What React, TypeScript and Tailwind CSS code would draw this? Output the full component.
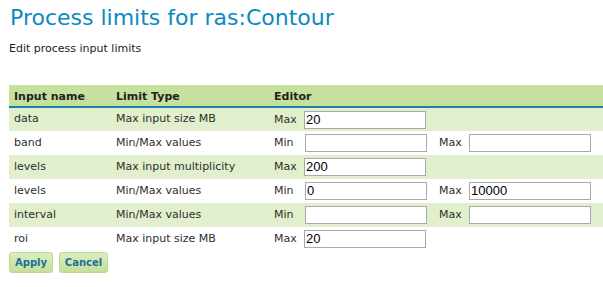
type Limit =
  | { kind: 'max'; value: string }
  | { kind: 'minmax'; min: string; max: string };

interface Row {
  name: string;
  type: string;
  limit: Limit;
}

const rows: Row[] = [
  { name: 'data', type: 'Max input size MB', limit: { kind: 'max', value: '20' } },
  { name: 'band', type: 'Min/Max values', limit: { kind: 'minmax', min: '', max: '' } },
  { name: 'levels', type: 'Max input multiplicity', limit: { kind: 'max', value: '200' } },
  { name: 'levels', type: 'Min/Max values', limit: { kind: 'minmax', min: '0', max: '10000' } },
  { name: 'interval', type: 'Min/Max values', limit: { kind: 'minmax', min: '', max: '' } },
  { name: 'roi', type: 'Max input size MB', limit: { kind: 'max', value: '20' } },
];

function LimitInput({ value }: { value: string }) {
  return (
    <input
      type="text"
      defaultValue={value}
      className="h-[18px] w-[122px] border border-[#a9a9a9] bg-white px-[1px] text-[13px] text-black outline-none"
      style={{ fontFamily: '"Liberation Sans", Arial, sans-serif' }}
    />
  );
}

function Editor({ limit }: { limit: Limit }) {
  if (limit.kind === 'max') {
    return (
      <div className="flex items-start">
        <span className="w-[30px] pt-[1px]">Max</span>
        <LimitInput value={limit.value} />
      </div>
    );
  }
  return (
    <div className="flex items-start">
      <span className="w-[31px] pt-[1px]">Min</span>
      <LimitInput value={limit.min} />
      <span className="ml-[12px] w-[30px] pt-[1px]">Max</span>
      <LimitInput value={limit.max} />
    </div>
  );
}

export default function App() {
  return (
    <div
      className="h-[287px] w-[603px] overflow-hidden bg-white pl-[9px] text-[11px] text-[#2e2e2e]"
      style={{ fontFamily: '"DejaVu Sans", Verdana, sans-serif' }}
    >
      <h1 className="pt-[4px] pl-[1px] text-[22px] leading-[28px] text-[#0c88c2]">Process limits for ras:Contour</h1>
      <p className="mt-[10px] text-[11px] leading-[14px] text-[#222]">Edit process input limits</p>

      <table className="mt-[29px] w-[620px] border-collapse">
        <thead>
          <tr className="border-b-2 border-[#1c7fa6] bg-[#c6e09e] text-left font-bold text-[#222]">
            <th className="h-[22px] w-[102px] px-[5px] pt-[3px] align-middle">Input name</th>
            <th className="h-[22px] w-[158px] px-[5px] pt-[3px] align-middle">Limit Type</th>
            <th className="h-[22px] px-[5px] pt-[3px] align-middle">Editor</th>
          </tr>
        </thead>
        <tbody>
          {rows.map((r, i) => (
            <tr key={i} className={i % 2 === 0 ? 'bg-[#e1efcc]' : 'bg-white'}>
              <td className="h-[24px] px-[5px] align-middle">{r.name}</td>
              <td className="h-[24px] px-[5px] align-middle">{r.type}</td>
              <td className="h-[24px] px-[5px] align-middle">
                <Editor limit={r.limit} />
              </td>
            </tr>
          ))}
        </tbody>
      </table>

      <div className="mt-[1px] flex gap-[6px]">
        <button className="h-[21px] w-[44px] rounded-[3px] border border-[#bcd98f] bg-gradient-to-b from-[#dcedc0] to-[#c4df99] text-[10px] font-bold text-[#1a6e9c]">
          Apply
        </button>
        <button className="h-[21px] w-[49px] rounded-[3px] border border-[#bcd98f] bg-gradient-to-b from-[#dcedc0] to-[#c4df99] text-[10px] font-bold text-[#1a6e9c]">
          Cancel
        </button>
      </div>
    </div>
  );
}
